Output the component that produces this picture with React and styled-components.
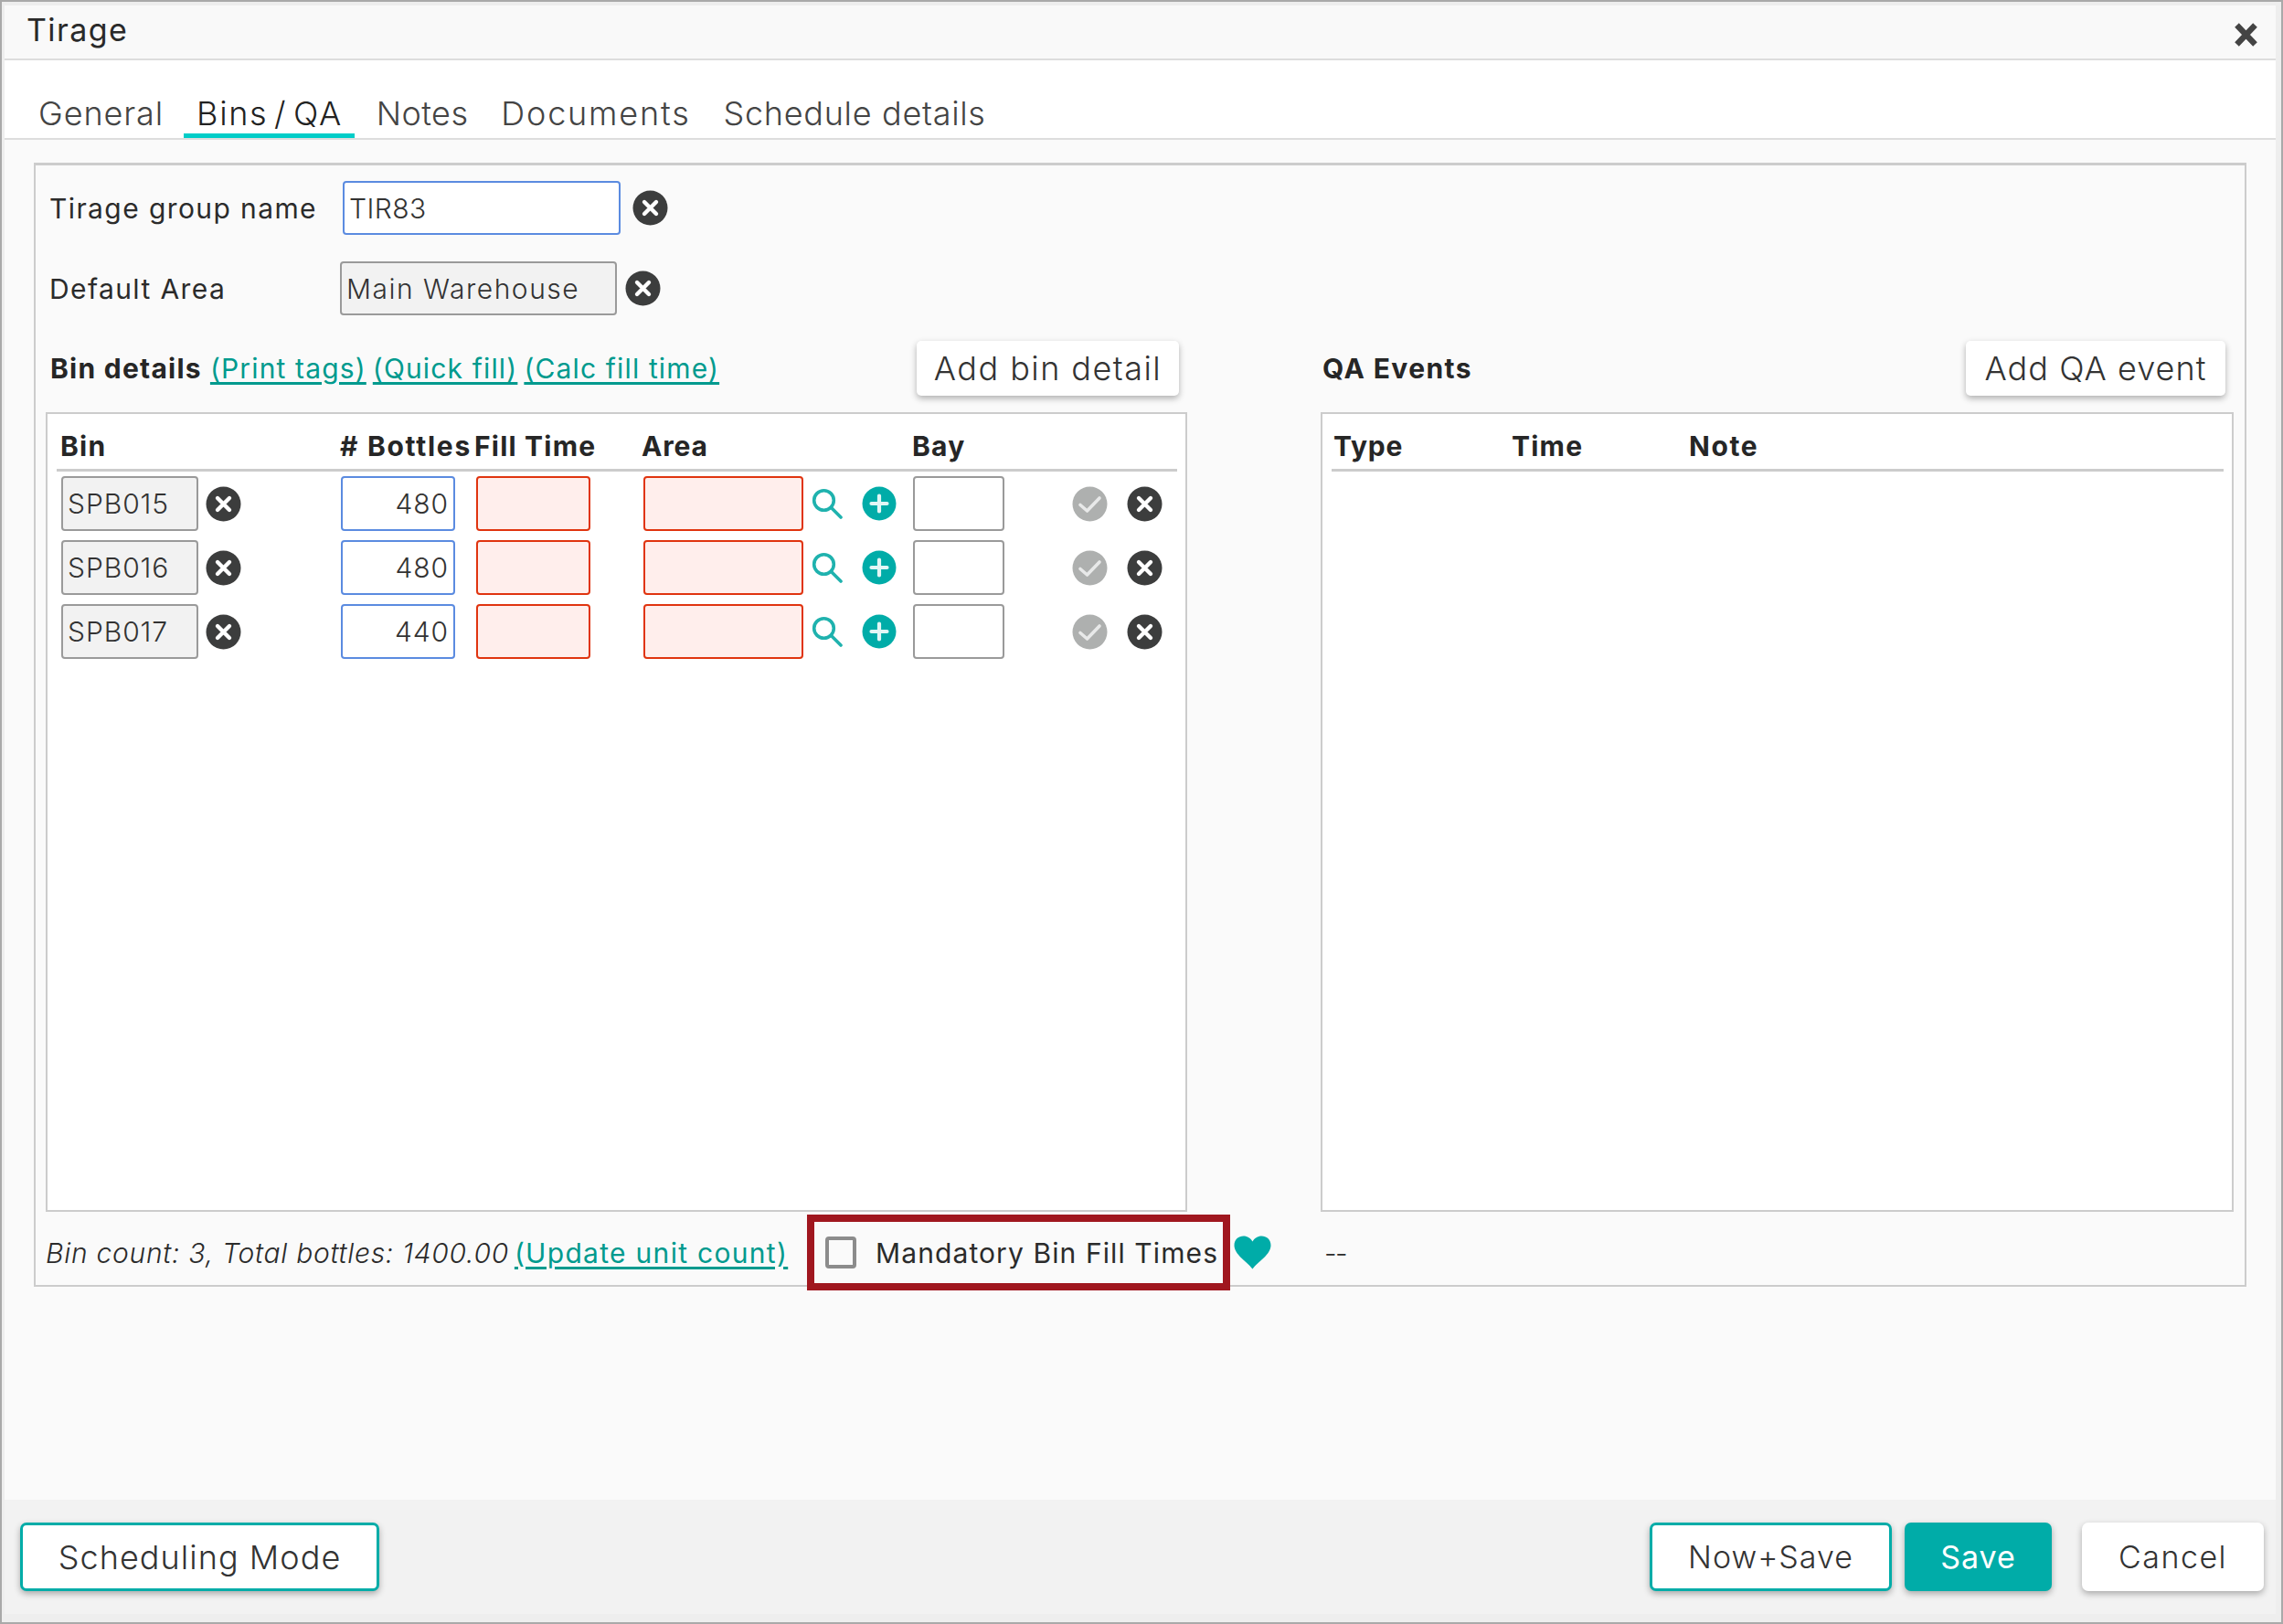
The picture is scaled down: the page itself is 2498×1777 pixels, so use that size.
import React from "react";
import styled, { createGlobalStyle, css } from "styled-components";

const Global = createGlobalStyle`
  html, body { margin: 0; padding: 0; background: #eee; }
  * { box-sizing: border-box; }
  body { font-family: Inter, "Noto Sans", "Liberation Sans", sans-serif; color: #2b2b2b; }
`;

const Windowed = styled.div`
  width: 2498px;
  height: 1777px;
  display: flex;
  flex-direction: column;
  background: #eeeeee;
  border-style: solid;
  border-color: #a9a9a9;
  border-width: 2px 2px 2px 2px;
  padding: 4px 6px 9px 3px;
`;
const Header = styled.header`
  height: 60px;
  flex: none;
  background: #f9f9f9;
  border-bottom: 2px solid #dddddd;
  display: flex;
  align-items: center;
  justify-content: space-between;
  padding: 0 19px 6px 24px;
`;
const Title = styled.h1`
  margin: 0;
  font-size: 34px;
  font-weight: 400;
  letter-spacing: 1.4px;
  color: #2a2a2a;
`;
const Tabs = styled.nav`
  height: 87px;
  flex: none;
  background: #ffffff;
  border-bottom: 2px solid #dddddd;
  display: flex;
  align-items: flex-end;
  padding-left: 37px;
`;
const Tab = styled.div`
  font-size: 36px;
  font-weight: 300;
  line-height: 43px;
  height: 54px;
  padding-top: 6px;
  white-space: nowrap;
  letter-spacing: ${p => p.$ls}px;
  margin-right: ${p => p.$gap}px;
  color: ${p => (p.$active ? "#222" : "#444")};
  ${p =>
    p.$active &&
    css`
      border-bottom: 5px solid #00cdc8;
      padding-left: 14px;
      padding-right: 13px;
      margin-left: -15px;
      word-spacing: -5px;
    `}
`;
const Body = styled.main`
  flex: 1;
  min-height: 0;
  background: #fafafa;
  padding: 25px 32px 0 32px;
`;
const Fieldset = styled.section`
  width: 2421px;
  height: 1230px;
  border: 2px solid #cccccc;
  border-top-width: 3px;
  padding: 17px 0 0 11px;
`;
const FormRow = styled.div`
  display: flex;
  align-items: center;
  height: 59px;
  margin-bottom: ${p => p.$mb}px;
`;
const Label = styled.label`
  width: ${p => p.$w}px;
  flex: none;
  padding-left: 4px;
  font-size: 30px;
  letter-spacing: ${p => p.$ls ?? 1.4}px;
  color: #2b2b2b;
  font-weight: 400;
  white-space: nowrap;
`;
const tones = {
  focus: css`border-color: #5b8be0; background: #fff;`,
  locked: css`border-color: #9a9a9a; background: #f2f2f2;`,
  error: css`border-color: #e0340f; background: #ffeeec;`,
  plain: css`border-color: #9a9a9a; background: #fff;`,
};
const Field = styled.input`
  width: ${p => p.$w}px;
  height: ${p => p.$h || 60}px;
  flex: none;
  border-width: 2px;
  border-style: solid;
  border-radius: 4px;
  outline: none;
  font-family: inherit;
  font-size: 30px;
  font-weight: 300;
  letter-spacing: ${p => p.$ls ?? 0.95}px;
  color: #333;
  padding: 0 5px;
  text-align: ${p => p.$align || "left"};
  ${p => tones[p.$tone || "plain"]}
`;
const Columns = styled.div`
  display: grid;
  grid-template-columns: 1395px 1000px;
  margin-top: 28px;
`;
const Col = styled.div`
  min-width: 0;
`;
const SectionHead = styled.div`
  width: ${p => p.$w}px;
  height: 60px;
  display: flex;
  align-items: center;
  justify-content: space-between;
  padding-left: ${p => p.$pl}px;
  margin-bottom: 18px;
`;
const HeadLeft = styled.div`
  display: flex;
  align-items: center;
  gap: 7px;
`;
const Strong = styled.span`
  font-size: 30px;
  font-weight: 700;
  letter-spacing: ${p => p.$ls ?? 1.25}px;
  color: #262626;
  margin-right: 2px;
`;
const Link = styled.a`
  font-size: 30px;
  font-weight: 400;
  letter-spacing: ${p => p.$ls ?? 1.15}px;
  color: #009a8e;
  text-decoration: underline;
  text-decoration-thickness: 3px;
  text-underline-offset: 4px;
  white-space: nowrap;
`;
const Button = styled.button`
  width: ${p => p.$w}px;
  height: ${p => p.$h || 60}px;
  flex: none;
  border: ${p => (p.$outlined ? "3px solid #00aca8" : "none")};
  border-radius: ${p => (p.$h ? 7 : 5)}px;
  background: ${p => (p.$primary ? "#00aca8" : "#fff")};
  color: ${p => (p.$primary ? "#fff" : "#333")};
  box-shadow: 0 3px 7px rgba(0, 0, 0, 0.3);
  font-family: inherit;
  font-size: ${p => p.$fs || 36}px;
  font-weight: ${p => (p.$primary ? 400 : 300)};
  letter-spacing: ${p => p.$ls ?? 1}px;
  padding: 0;
  margin-left: ${p => p.$ml || 0}px;
  white-space: nowrap;
`;
const Panel = styled.div`
  width: ${p => p.$w}px;
  height: 875px;
  background: #fff;
  border: 2px solid #cccccc;
  padding: 0 ${p => p.$pr}px 0 ${p => p.$pl}px;
`;
const binGrid = css`
  display: grid;
  grid-template-columns: 310px 147px 183px 296px 289px;
`;
const HeadRow = styled.div`
  ${p =>
    p.$qa
      ? css`
          display: grid;
          grid-template-columns: 195px 194px 1fr;
          padding-left: 2px;
        `
      : binGrid}
  height: 63px;
  align-items: end;
  border-bottom: 3px solid #cccccc;
  padding-bottom: 7px;
  font-size: 30px;
  font-weight: 700;
  line-height: 36px;
  color: #262626;
`;
const HeadCell = styled.div`
  padding-left: ${p => p.$pl || 0}px;
  white-space: nowrap;
  letter-spacing: ${p => p.$ls ?? 1}px;
`;
const Rows = styled.div`
  display: flex;
  flex-direction: column;
  gap: 10px;
  padding-top: 5px;
`;
const BinRow = styled.div`
  ${binGrid}
  height: 60px;
`;
const Cell = styled.div`
  display: flex;
  align-items: center;
  padding-left: ${p => p.$pl || 0}px;
`;
const IconWrap = styled.span`
  display: inline-flex;
  flex: none;
  margin-left: ${p => p.$ml || 0}px;
  margin-top: ${p => p.$mt || 0}px;
  filter: blur(0.6px);
  svg { display: block; }
`;
const Status = styled.div`
  display: flex;
  align-items: center;
  padding-top: 3px;
`;
const StatusText = styled.div`
  width: 833px;
  flex: none;
  height: 83px;
  display: flex;
  align-items: center;
  gap: 6px;
  font-size: 30px;
  white-space: nowrap;
`;
const Italic = styled.span`
  font-style: italic;
  font-weight: 300;
  letter-spacing: 0.72px;
`;
const Annotated = styled.div`
  width: 463px;
  height: 83px;
  flex: none;
  border: 8px solid #a0171f;
  display: flex;
  align-items: center;
  padding-left: 12px;
  gap: 21px;
  font-size: 30px;
  letter-spacing: 1.1px;
  color: #2b2b2b;
  white-space: nowrap;
`;
const Check = styled.input.attrs({ type: "checkbox" })`
  appearance: none;
  width: 34px;
  height: 35px;
  margin: 0;
  flex: none;
  border: 4px solid #8c8c8c;
  border-radius: 4px;
  background: #fafafa;
  filter: blur(0.6px);
`;
const Dash = styled.div`
  height: 86px;
  display: flex;
  align-items: center;
  padding: 3px 0 0 4px;
  font-size: 30px;
  font-weight: 300;
  letter-spacing: -1.5px;
`;
const Footer = styled.footer`
  height: 125px;
  flex: none;
  background: #f2f2f2;
  display: flex;
  justify-content: space-between;
  padding: 25px 13px 0 17px;
`;
const Group = styled.div`
  display: flex;
`;

const ClearSvg = () => (
  <svg width="39" height="39" viewBox="0 0 39 39">
    <circle cx="19.5" cy="19.5" r="19" fill="#3c3d3d" />
    <path d="M13 13 L26 26 M26 13 L13 26" stroke="#fff" strokeWidth="4.4" strokeLinecap="round" />
  </svg>
);
const Search = () => (
  <IconWrap $ml={9}>
    <svg width="34" height="34" viewBox="0 0 34 34">
      <circle cx="13.5" cy="13.5" r="10.8" fill="none" stroke="#1fb2ae" strokeWidth="3.6" />
      <path d="M21.5 21.5 L32 32" stroke="#1fb2ae" strokeWidth="3.6" strokeLinecap="round" />
    </svg>
  </IconWrap>
);
const Plus = () => (
  <IconWrap $ml={21}>
    <svg width="38" height="38" viewBox="0 0 38 38">
      <circle cx="19" cy="19" r="18.5" fill="#00aca8" />
      <path d="M19 10.5 V27.5 M10.5 19 H27.5" stroke="#e2f6f5" strokeWidth="4.2" strokeLinecap="round" />
    </svg>
  </IconWrap>
);
const Done = () => (
  <IconWrap $ml={74}>
    <svg width="39" height="39" viewBox="0 0 39 39">
      <circle cx="19.5" cy="19.5" r="19" fill="#aeb0af" />
      <path d="M9 20.5 L16.5 27 L30 13" fill="none" stroke="#e8e9e9" strokeWidth="3.6" strokeLinecap="round" strokeLinejoin="round" />
    </svg>
  </IconWrap>
);
const Close = () => (
  <IconWrap $mt={12}>
    <svg width="27" height="28" viewBox="0 0 27 28">
      <path d="M3.5 3.5 L23.5 24.5 M23.5 3.5 L3.5 24.5" stroke="#444" strokeWidth="6.4" strokeLinecap="butt" />
    </svg>
  </IconWrap>
);
const Heart = () => (
  <IconWrap $ml={4}>
    <svg width="41" height="37" viewBox="0 0 41 37">
      <path d="M20.5 36.5 C14 28 0.5 21 0.5 10.5 C0.5 4 5.5 0.5 10.5 0.5 C15 0.5 18.5 3 20.5 6.5 C22.5 3 26 0.5 30.5 0.5 C35.5 0.5 40.5 4 40.5 10.5 C40.5 21 27 28 20.5 36.5 Z" fill="#00aca8" />
    </svg>
  </IconWrap>
);

const bins = [
  { id: "SPB015", n: "480" },
  { id: "SPB016", n: "480" },
  { id: "SPB017", n: "440" },
];

export default function App() {
  return (
    <>
      <Global />
      <Windowed>
        <Header>
          <Title>Tirage</Title>
          <Close />
        </Header>
        <Tabs>
          <Tab $gap={37} $ls={0.9}>General</Tab>
          <Tab $active $gap={24} $ls={1.65}>Bins / QA</Tab>
          <Tab $gap={36} $ls={0.4}>Notes</Tab>
          <Tab $gap={36} $ls={1.8}>Documents</Tab>
          <Tab $gap={0} $ls={0.7}>Schedule details</Tab>
        </Tabs>
        <Body>
          <Fieldset>
            <FormRow $mb={29}>
              <Label $w={325}>Tirage group name</Label>
              <Field $w={304} $h={59} $ls={0.4} $tone="focus" defaultValue="TIR83" />
              <IconWrap $ml={13}><ClearSvg /></IconWrap>
            </FormRow>
            <FormRow $mb={0}>
              <Label $w={322}>Default Area</Label>
              <Field $w={303} $h={59} $ls={1.5} $tone="locked" readOnly defaultValue="Main Warehouse" />
              <IconWrap $ml={9}><ClearSvg /></IconWrap>
            </FormRow>
            <Columns>
              <Col>
                <SectionHead $w={1240} $pl={5}>
                  <HeadLeft>
                    <Strong>Bin details</Strong>
                    <Link>(Print tags)</Link>
                    <Link>(Quick fill)</Link>
                    <Link>(Calc fill time)</Link>
                  </HeadLeft>
                  <Button $w={287} $ls={1.45}>Add bin detail</Button>
                </SectionHead>
                <Panel $w={1249} $pl={10} $pr={9}>
                  <HeadRow>
                    <HeadCell $pl={4} $ls={1.2}>Bin</HeadCell>
                    <HeadCell $ls={1.7}>#&nbsp;Bottles</HeadCell>
                    <HeadCell $ls={1.2}>Fill Time</HeadCell>
                    <HeadCell $ls={0.8}>Area</HeadCell>
                    <HeadCell $ls={1.2}>Bay</HeadCell>
                  </HeadRow>
                  <Rows>
                    {bins.map(b => (
                      <BinRow key={b.id}>
                        <Cell $pl={5}>
                          <Field $w={150} $tone="locked" readOnly defaultValue={b.id} />
                          <IconWrap $ml={8}><ClearSvg /></IconWrap>
                        </Cell>
                        <Cell $pl={1}>
                          <Field $w={125} $tone="focus" $align="right" defaultValue={b.n} />
                        </Cell>
                        <Cell $pl={2}>
                          <Field $w={125} $tone="error" />
                        </Cell>
                        <Cell $pl={2}>
                          <Field $w={175} $tone="error" />
                          <Search />
                          <Plus />
                        </Cell>
                        <Cell $pl={1}>
                          <Field $w={100} $tone="plain" />
                          <Done />
                          <IconWrap $ml={21}><ClearSvg /></IconWrap>
                        </Cell>
                      </BinRow>
                    ))}
                  </Rows>
                </Panel>
                <Status>
                  <StatusText>
                    <Italic>Bin count: 3, Total bottles: 1400.00</Italic>
                    <Link $ls={1.3}>(Update unit count)</Link>
                  </StatusText>
                  <Annotated>
                    <Check />
                    <span>Mandatory Bin Fill Times</span>
                  </Annotated>
                  <Heart />
                </Status>
              </Col>
              <Col>
                <SectionHead $w={990} $pl={2}>
                  <Strong $ls={1.4}>QA Events</Strong>
                  <Button $w={284} $ls={1.05}>Add QA event</Button>
                </SectionHead>
                <Panel $w={999} $pl={10} $pr={9}>
                  <HeadRow $qa>
                    <HeadCell $ls={0.8}>Type</HeadCell>
                    <HeadCell $ls={1.2}>Time</HeadCell>
                    <HeadCell $ls={1.6}>Note</HeadCell>
                  </HeadRow>
                </Panel>
                <Dash>--</Dash>
              </Col>
            </Columns>
          </Fieldset>
        </Body>
        <Footer>
          <Button $w={393} $h={75} $outlined $fs={36} $ls={1.05}>Scheduling Mode</Button>
          <Group>
            <Button $w={265} $h={75} $outlined $fs={34}>Now+Save</Button>
            <Button $w={161} $h={75} $primary $ml={14} $fs={34}>Save</Button>
            <Button $w={199} $h={75} $ml={33} $fs={34} $ls={1.5}>Cancel</Button>
          </Group>
        </Footer>
      </Windowed>
    </>
  );
}
